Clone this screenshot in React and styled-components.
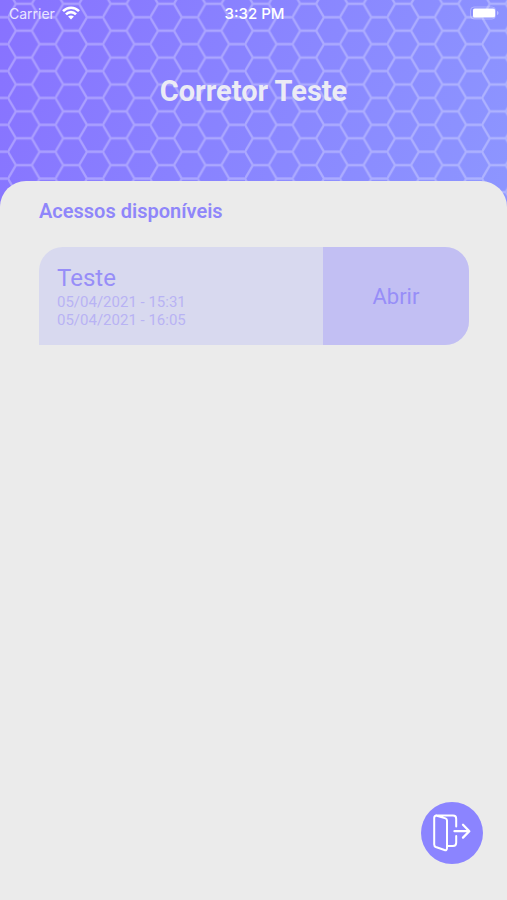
import React, { useState } from 'react';
import styled, { createGlobalStyle } from 'styled-components';

const GlobalStyle = createGlobalStyle`
  * {
    box-sizing: border-box;
  }

  body {
    margin: 0;
    background: #ebebeb;
    font-family: Roboto, sans-serif;
  }
`;

const Page = styled.div`
  min-height: 100vh;
  display: flex;
  flex-direction: column;
`;

const Header = styled.header`
  position: relative;
  height: 211px;
  color: #fff;
  background: linear-gradient(110deg, #8872ff 0%, #8983ff 45%, #8d96ff 100%);
`;

const Honeycomb = styled.svg`
  position: absolute;
  inset: 0;
  width: 100%;
  height: 100%;
`;

const StatusBar = styled.div`
  position: relative;
  display: grid;
  grid-template-columns: 1fr auto 1fr;
  align-items: center;
  height: 26px;
  padding: 0 7px 0 9px;
  font-family: Inter, sans-serif;
  font-size: 14px;
`;

const Carrier = styled.div`
  display: flex;
  align-items: center;
  gap: 7px;
  color: #e9e5ff;
`;

const Clock = styled.time`
  font-size: 15px;
  font-weight: 500;
`;

const Battery = styled.svg`
  justify-self: end;
`;

const Title = styled.h1`
  position: relative;
  margin: 47px 0 0;
  text-align: center;
  font-size: 29px;
  line-height: 36px;
  font-weight: 700;
  color: #ebebf5;
`;

const Content = styled.main`
  position: relative;
  flex: 1;
  margin-top: -30px;
  padding: 18px 38px 18px 39px;
  border-radius: 26px 26px 0 0;
  background: #ebebeb;
`;

const Subtitle = styled.h2`
  margin: 0 0 24px;
  font-size: 20px;
  line-height: 24px;
  font-weight: 600;
  color: #8f86fa;
`;

const AccessCard = styled.article`
  display: flex;
  border-radius: 24px 24px 24px 0;
  overflow: hidden;
  background: #d8d9ef;
`;

const AccessInfo = styled.div`
  flex: 1;
  padding: 16px 18px;
`;

const AccessName = styled.h3`
  margin: 0;
  font-size: 24px;
  line-height: 30px;
  font-weight: 400;
  color: #978ef8;
`;

const AccessDate = styled.p`
  margin: 0;
  font-size: 15px;
  line-height: 18px;
  color: #b8b3f4;
`;

const OpenButton = styled.button`
  width: 34%;
  padding: 0;
  border: 0;
  background: #c2bff3;
  color: #978ef8;
  font-family: inherit;
  font-size: 22px;
  cursor: pointer;
`;

const ExitButton = styled.button`
  position: fixed;
  right: 24px;
  bottom: 36px;
  width: 62px;
  height: 62px;
  padding: 0;
  border: 0;
  border-radius: 50%;
  background: #8b84ff;
  color: #fff;
  cursor: pointer;

  & svg {
    display: block;
  }
`;

const HexagonPattern = () => (
  <Honeycomb aria-hidden="true">
    <defs>
      <pattern id="hexagons" x="8" y="3.8" width="47.4" height="26.9" patternUnits="userSpaceOnUse">
        <path
          d="M-1 13.45 H0 L7.9 0 H23.7 L31.6 13.45 H48.4 M0 13.45 L7.9 26.9 H23.7 L31.6 13.45"
          fill="none"
          stroke="#fff"
          strokeOpacity="0.29"
          strokeWidth="2.3"
        />
      </pattern>
    </defs>
    <rect width="100%" height="100%" fill="url(#hexagons)" />
  </Honeycomb>
);

const WifiIcon = () => (
  <svg width="18" height="14" viewBox="0 0 18 14" fill="none" stroke="#fff" strokeWidth="2.6" aria-hidden="true">
    <path d="M1 5.2 C5.5 0.6 12.5 0.6 17 5.2" />
    <path d="M4 8.3 C6.8 5.4 11.2 5.4 14 8.3" />
    <path d="M6.1 10.6 C7.8 9 10.2 9 11.9 10.6 L9 13.6 Z" fill="#fff" stroke="none" />
  </svg>
);

const BatteryIcon = () => (
  <Battery width="30" height="14" viewBox="0 0 30 14" aria-hidden="true">
    <rect x="0.5" y="1" width="25" height="12" rx="3.5" fill="none" stroke="#fff" strokeOpacity="0.3" />
    <rect x="3" y="2.6" width="22" height="9" rx="1.6" fill="#fff" />
    <path d="M27 5 C29 5.6 29 8.4 27 9 Z" fill="#fff" fillOpacity="0.4" />
  </Battery>
);

const ExitIcon = () => (
  <svg
    width="62"
    height="62"
    viewBox="0 0 62 62"
    fill="none"
    stroke="currentColor"
    strokeWidth="2"
    strokeLinecap="round"
    strokeLinejoin="round"
    aria-hidden="true"
  >
    <path d="M15 13.5 L24.5 16.4 Q26 17 26 18.6 V46 Q26 48.7 23.5 48 L14.8 45 Q13.2 44.4 13.2 42.5 V16 Q13.2 13.5 15.5 13.5 H32 Q35.2 13.5 35.2 16.7 V24.5" />
    <path d="M26 44 H32 Q35.2 44 35.2 40.8 V34" />
    <path d="M33.5 29.2 H48 M42 22.8 L48.3 29.2 L42 35.6" strokeWidth="2.3" />
  </svg>
);

const accesses = [
  { id: 1, name: 'Teste', start: '05/04/2021 - 15:31', end: '05/04/2021 - 16:05' },
];

const App = () => {
  const [opened, setOpened] = useState(null);

  return (
    <Page>
      <GlobalStyle />

      <Header>
        <HexagonPattern />
        <StatusBar>
          <Carrier>
            Carrier
            <WifiIcon />
          </Carrier>
          <Clock>3:32 PM</Clock>
          <BatteryIcon />
        </StatusBar>
        <Title>Corretor Teste</Title>
      </Header>

      <Content>
        <Subtitle>Acessos disponíveis</Subtitle>
        {accesses.map(access => (
          <AccessCard key={access.id}>
            <AccessInfo>
              <AccessName>{access.name}</AccessName>
              <AccessDate>{access.start}</AccessDate>
              <AccessDate>{access.end}</AccessDate>
            </AccessInfo>
            <OpenButton
              type="button"
              aria-pressed={opened === access.id}
              onClick={() => setOpened(access.id)}
            >
              Abrir
            </OpenButton>
          </AccessCard>
        ))}
      </Content>

      <ExitButton type="button" aria-label="Sair">
        <ExitIcon />
      </ExitButton>
    </Page>
  );
};

export default App;
